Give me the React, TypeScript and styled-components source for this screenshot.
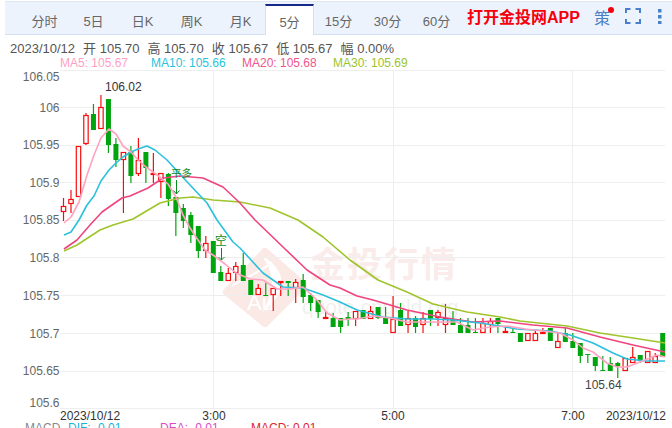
import React from "react";
import styled, { createGlobalStyle } from "styled-components";

const Global = createGlobalStyle`
  html, body { margin: 0; padding: 0; background: #fff; }
  body { font-family: "Liberation Sans", "Noto Sans CJK SC", sans-serif; }
`;

const Page = styled.div`
  width: 672px;
  height: 428px;
  overflow: hidden;
  background: #fff;
`;

const Toolbar = styled.div`
  display: flex;
  align-items: stretch;
  height: 30px;
  margin: 1px 0 0 5px;
  padding: 2px 0 0 15px;
  background: #edf3fd;
  border-top: 1px solid #dfe7f5;
  border-bottom: 1px solid #d3dff2;
  box-sizing: content-box;
`;

const Tab = styled.div<{ $active?: boolean }>`
  width: 49px;
  box-sizing: border-box;
  display: flex;
  align-items: center;
  justify-content: center;
  font-size: 13px;
  color: #666;
  margin-bottom: ${(p) => (p.$active ? "-1px" : "0")};
  padding-top: ${(p) => (p.$active ? "1px" : "0")};
  background: ${(p) => (p.$active ? "#fff" : "transparent")};
  border-top: 2px solid ${(p) => (p.$active ? "#14298a" : "transparent")};
  border-left: 1px solid ${(p) => (p.$active ? "#d3dff2" : "transparent")};
  border-right: 1px solid ${(p) => (p.$active ? "#d3dff2" : "transparent")};
`;

const AppLink = styled.div`
  display: flex;
  align-items: center;
  margin-left: 6px;
  font-size: 16px;
  font-weight: 700;
  color: #f5000b;
  white-space: nowrap;
  padding-bottom: 6px;
`;

const Strategy = styled.div`
  position: relative;
  width: 16px;
  margin-left: 14px;
  font-size: 16px;
  color: #4a80c8;
  display: flex;
  align-items: center;
  padding-bottom: 4px;
`;

const RedDot = styled.span`
  position: absolute;
  top: 3px;
  right: -4px;
  width: 6px;
  height: 6px;
  border-radius: 50%;
  background: #f5000b;
`;

const IconSlot = styled.div<{ $gap: number }>`
  margin-left: ${(p) => p.$gap}px;
  padding-top: 4px;
`;

const InfoRow = styled.div`
  display: flex;
  height: 17px;
  margin-top: 5px;
  padding-left: 10px;
  font-size: 13px;
  line-height: 17px;
  color: #555;
`;

const InfoItem = styled.span`
  margin-right: 8px;
  white-space: pre;
`;

const MaRow = styled.div`
  display: flex;
  height: 13px;
  padding-left: 60px;
  font-size: 12px;
  line-height: 13px;
`;

const MaItem = styled.span<{ $color: string }>`
  width: 91px;
  color: ${(p) => p.$color};
  white-space: pre;
`;

const Chart = styled.svg`
  display: block;
  width: 672px;
  height: 352px;
`;

const MacdRow = styled.div`
  display: flex;
  height: 6px;
  padding-left: 25px;
  font-size: 12px;
  line-height: 12px;
`;

const MacdItem = styled.span<{ $color: string; $w: number }>`
  width: ${(p) => p.$w}px;
  color: ${(p) => p.$color};
  white-space: pre;
`;

const tabs = ["分时", "5日", "日K", "周K", "月K", "5分", "15分", "30分", "60分"];

const RED = "#f70d0d";
const GREEN = "#00a50e";

// [up, wickTop, bodyTop, bodyBottom, wickBottom]
const candles: number[][] = [
  [1, 198, 206, 212, 221], [1, 190, 199, 204, 213], [1, 146, 146, 197, 197], [1, 113, 115, 144, 145],
  [0, 104, 114, 130, 130], [1, 95, 107, 129, 129], [0, 99, 99, 145, 153], [0, 138, 144, 160, 167],
  [1, 152, 152, 160, 213], [0, 146, 152, 176, 183], [1, 138, 160, 174, 176], [0, 152, 152, 168, 183],
  [1, 153, 173, 175, 183], [1, 173, 173, 182, 198], [0, 173, 174, 199, 206], [0, 197, 197, 213, 236],
  [0, 204, 208, 221, 228], [0, 212, 215, 235, 243], [0, 226, 226, 251, 258], [1, 236, 243, 251, 258],
  [0, 241, 241, 273, 273], [0, 266, 272, 281, 281], [1, 268, 273, 281, 281], [1, 262, 266, 273, 281],
  [0, 253, 265, 281, 281], [0, 280, 280, 295, 295], [1, 284, 288, 295, 295], [0, 283, 295, 296, 296],
  [1, 288, 288, 295, 311], [1, 281, 281, 283, 296], [0, 281, 281, 283, 296], [1, 279, 282, 288, 303],
  [0, 274, 280, 297, 303], [0, 293, 295, 303, 311], [0, 300, 300, 312, 318], [1, 311, 317, 319, 319],
  [0, 313, 318, 327, 327], [0, 318, 318, 327, 333], [0, 312, 317, 319, 326], [1, 311, 311, 319, 326],
  [0, 310, 310, 319, 319], [1, 306, 311, 319, 319], [0, 307, 307, 318, 319], [0, 307, 317, 324, 324],
  [1, 296, 319, 333, 333], [0, 303, 310, 326, 326], [1, 311, 318, 325, 333], [0, 316, 318, 327, 333],
  [1, 312, 318, 325, 333], [0, 310, 310, 319, 326], [1, 310, 312, 318, 326], [1, 304, 318, 325, 333],
  [0, 311, 319, 325, 325], [0, 318, 325, 333, 333], [0, 318, 325, 333, 333], [0, 318, 332, 333, 333],
  [1, 318, 323, 333, 333], [1, 318, 321, 325, 333], [0, 318, 318, 324, 333], [1, 326, 331, 333, 333],
  [0, 328, 332, 333, 333], [0, 333, 333, 342, 342], [1, 333, 333, 341, 341], [1, 330, 333, 341, 341],
  [1, 328, 332, 333, 333], [0, 328, 328, 341, 341], [1, 333, 341, 348, 348], [0, 328, 333, 342, 342],
  [0, 333, 341, 348, 348], [0, 343, 343, 356, 363], [0, 354, 354, 355, 363], [0, 357, 357, 366, 371],
  [0, 356, 370, 371, 371], [0, 357, 363, 371, 371], [0, 362, 363, 366, 378], [1, 358, 358, 371, 371],
  [1, 347, 357, 363, 363], [0, 355, 355, 361, 363], [1, 351, 351, 363, 363], [1, 353, 356, 363, 363],
  [0, 333, 333, 357, 357],
];

const ma5 = "64,223 71,217 79,202 87,175 94,155 101,138 109,129 116,134 123,146 131,152 138,160 146,167 153,172 161,178 168,184 176,197 183,215 190,228 198,240 205,250 213,255 225,264 236,273 250,279 263,280 277,289 290,289 303,287 317,300 327,313 340,320 350,319 357,319 373,316 390,318 407,322 423,322 440,322 457,322 473,330 490,327 507,326 525,329 543,331 560,333 573,340 583,348 593,352 607,363 617,367 627,367 640,362 657,355 665,357";
const ma10 = "64,235 71,232 79,220 87,205 94,196 101,181 109,170 116,163 123,157 131,152 138,149 147,146 155,150 167,160 178,172 190,185 207,203 217,220 233,242 240,248 263,273 283,287 303,288 323,295 340,302 357,310 383,317 407,319 433,319 453,320 480,323 500,326 517,329 550,331 570,335 593,343 613,353 627,359 647,361 665,361";
const ma20 = "64,249 77,240 90,225 102,212 122,198 130,196 148,188 163,178 180,176 203,178 223,187 240,203 255,220 283,247 307,270 330,285 340,288 357,296 373,300 407,310 440,317 473,322 500,321 533,325 567,328 600,337 633,345 665,352";
const ma30 = "64,251 77,245 100,230 113,225 133,219 160,203 180,198 193,197 213,200 240,202 270,208 298,220 323,237 350,260 378,280 407,292 433,304 467,312 500,317 520,321 567,326 600,333 633,338 665,343";

const yTicks: [string, number, number][] = [
  ["106.05", 70, 76], ["106", 107, 107], ["105.95", 144.5, 144.5], ["105.9", 182, 182],
  ["105.85", 219.5, 219.5], ["105.8", 257, 257], ["105.75", 295, 295], ["105.7", 333, 333],
  ["105.65", 370.5, 370.5], ["105.6", 408, 402],
];

export default function App() {
  return (
    <Page>
      <Global />
      <Toolbar>
        {tabs.map((t) => (
          <Tab key={t} $active={t === "5分"}>{t}</Tab>
        ))}
        <AppLink>打开金投网APP</AppLink>
        <Strategy>
          策
          <RedDot />
        </Strategy>
        <IconSlot $gap={15}>
          <svg width="16" height="16" viewBox="0 0 16 16" fill="none" stroke="#4a80c8" strokeWidth="2">
            <path d="M1 5V1H5.5M10.5 1H15V5M15 11V15H10.5M5.5 15H1V11" />
          </svg>
        </IconSlot>
        <IconSlot $gap={10}>
          <svg width="16" height="16" viewBox="0 0 16 16" fill="#4a80c8">
            <rect x="7" y="1" width="3.5" height="3.5" />
            <rect x="7" y="7" width="3.5" height="3.5" />
            <rect x="7" y="13" width="3.5" height="3.5" />
          </svg>
        </IconSlot>
      </Toolbar>
      <InfoRow>
        <InfoItem>2023/10/12</InfoItem>
        <InfoItem>开 105.70</InfoItem>
        <InfoItem>高 105.70</InfoItem>
        <InfoItem>收 105.67</InfoItem>
        <InfoItem>低 105.67</InfoItem>
        <InfoItem>幅 0.00%</InfoItem>
      </InfoRow>
      <MaRow>
        <MaItem $color="#ff9fbf">MA5: 105.67</MaItem>
        <MaItem $color="#27c4dc">MA10: 105.66</MaItem>
        <MaItem $color="#f1558a">MA20: 105.68</MaItem>
        <MaItem $color="#9cc32a">MA30: 105.69</MaItem>
      </MaRow>
      <Chart viewBox="0 70 672 352">
        {/* watermark */}
        <polygon points="265,252 303,285 265,323 227,292" fill="#fae9e5" stroke="#fae9e5" strokeWidth="8" strokeLinejoin="round" />
        <path d="M262,256 C284,268 292,290 262,312 C276,290 274,272 262,256 Z" fill="#fff" />
        <path d="M232,286 C246,276 262,272 272,262" fill="none" stroke="#fff" strokeWidth="2" />
        <text x="247" y="310" fontSize="22" fill="#fff">Au</text>
        <text x="310" y="277" fontSize="35" fontWeight="700" fill="#faecea" letterSpacing="2">金投行情</text>
        <text x="302" y="314" fontSize="21" fill="#f0f0f0">quote.cngold.org</text>

        {/* grid */}
        {yTicks.map(([, gy]) => (
          <line key={gy} x1="60" x2="665" y1={Math.round(gy) + 0.5} y2={Math.round(gy) + 0.5} stroke="#eeeeee" />
        ))}
        {[213, 393, 572].map((gx) => (
          <line key={gx} x1={gx + 0.5} x2={gx + 0.5} y1="70" y2="408" stroke="#eeeeee" />
        ))}
        {yTicks.map(([label, , ty]) => (
          <text key={label} x="59.5" y={ty + 4.5} textAnchor="end" fontSize="12" fill="#666">{label}</text>
        ))}

        {/* candles */}
        {candles.map(([up, wt, bt, bb, wb], i) => {
          const cx = 63.5 + 7.49 * i;
          const color = up ? RED : GREEN;
          return (
            <g key={i}>
              <line x1={cx} x2={cx} y1={wt} y2={wb} stroke={color} strokeWidth="1.2" />
              {up ? (
                <rect x={cx - 2.2} y={bt + 0.5} width="4.4" height={Math.max(bb - bt - 1, 1)} fill="#fff" stroke={color} strokeWidth="1.2" />
              ) : (
                <rect x={cx - 2.5} y={bt} width="5" height={Math.max(bb - bt, 1)} fill={color} />
              )}
            </g>
          );
        })}

        {/* moving averages */}
        <polyline points={ma30} fill="none" stroke="#9fc42c" strokeWidth="1.6" strokeLinejoin="round" />
        <polyline points={ma20} fill="none" stroke="#f0447e" strokeWidth="1.6" strokeLinejoin="round" />
        <polyline points={ma10} fill="none" stroke="#2cc0dc" strokeWidth="1.6" strokeLinejoin="round" />
        <polyline points={ma5} fill="none" stroke="#ffa3c0" strokeWidth="1.6" strokeLinejoin="round" />

        {/* signals */}
        <text x="171" y="177" fontSize="10.5" fill="#0c8a22" fontFamily="Noto Sans CJK SC">平多</text>
        <path d="M176.5,180V194M173.5,190.5L176.5,194L179.5,190.5" fill="none" stroke="#0c8a22" strokeWidth="1" />
        <text x="215" y="245" fontSize="12" fill="#0c8a22" fontFamily="Noto Sans CJK SC">空</text>
        <path d="M221.5,248V260M218.5,257L221.5,260L224.5,257" fill="none" stroke="#0c8a22" strokeWidth="1" />

        {/* labels */}
        <text x="105" y="91" fontSize="12" fill="#333">106.02</text>
        <text x="585" y="389" fontSize="12" fill="#444">105.64</text>
        <text x="60" y="420" fontSize="12" fill="#333">2023/10/12</text>
        <text x="214" y="420" fontSize="12" fill="#333" textAnchor="middle">3:00</text>
        <text x="393" y="420" fontSize="12" fill="#333" textAnchor="middle">5:00</text>
        <text x="573" y="420" fontSize="12" fill="#333" textAnchor="middle">7:00</text>
        <text x="666" y="420" fontSize="12" fill="#333" textAnchor="end">2023/10/12</text>
      </Chart>
      <MacdRow>
        <MacdItem $color="#888" $w={43}>MACD</MacdItem>
        <MacdItem $color="#17b4e0" $w={92}>DIF: -0.01</MacdItem>
        <MacdItem $color="#d84cc8" $w={91}>DEA: -0.01</MacdItem>
        <MacdItem $color="#d8262c" $w={80}>MACD: 0.01</MacdItem>
      </MacdRow>
    </Page>
  );
}
